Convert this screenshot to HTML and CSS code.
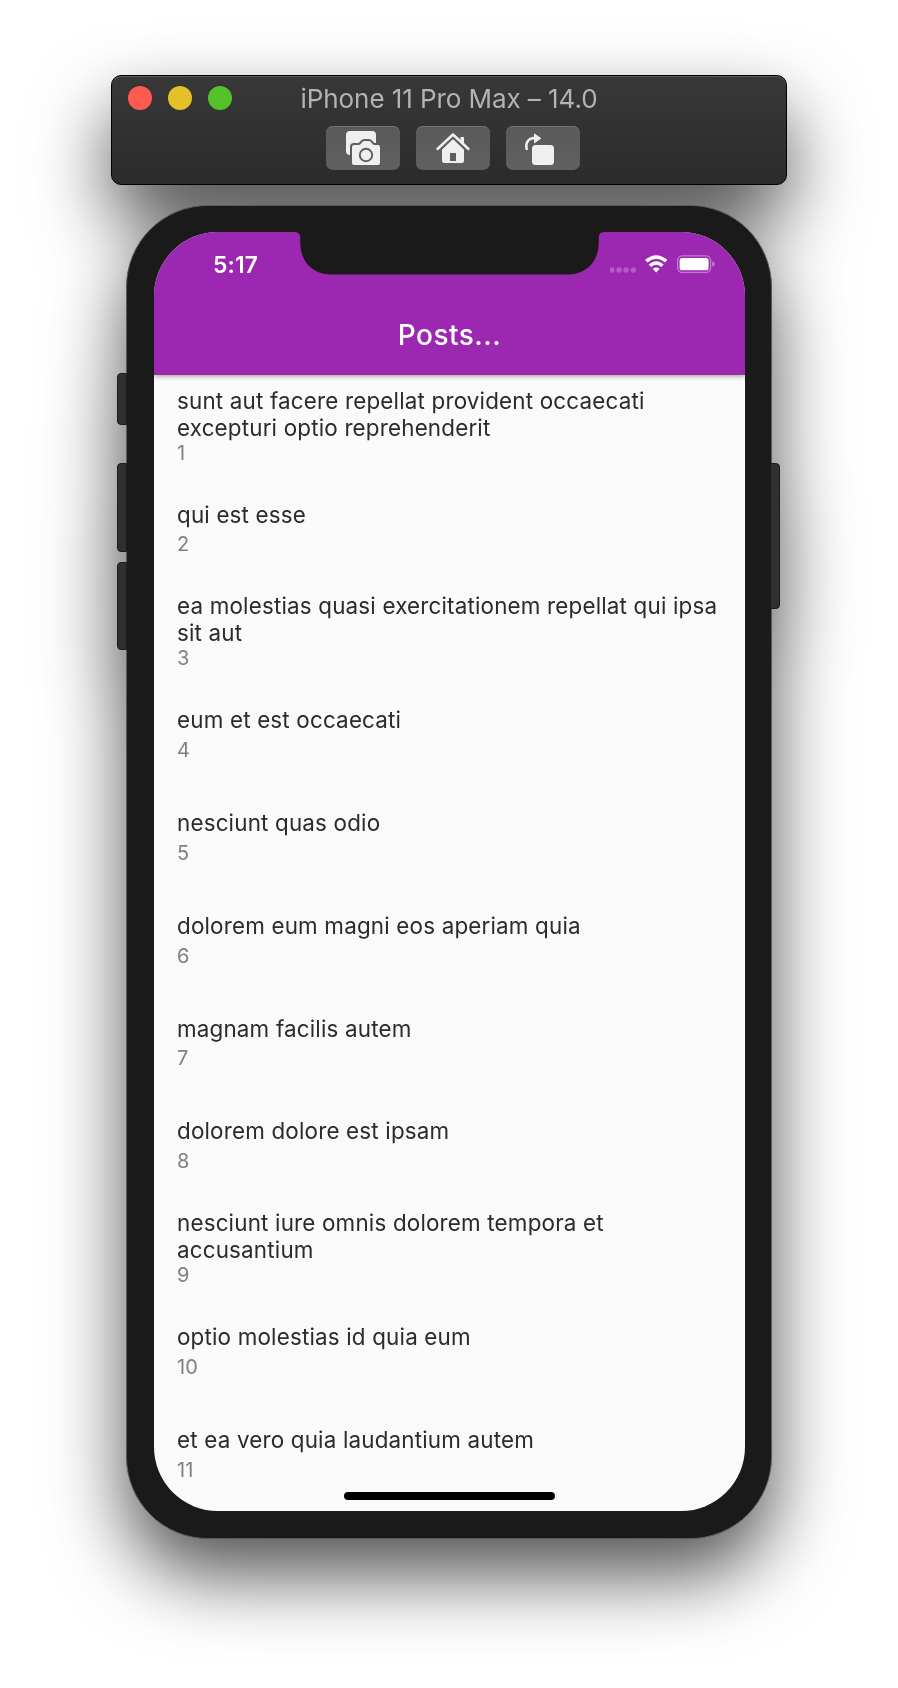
FILE: index.html
```html
<!DOCTYPE html>
<html lang="en">
<head>
<meta charset="utf-8">
<title>iPhone 11 Pro Max – 14.0</title>
<link rel="stylesheet" href="styles.css">
</head>
<body>
<main class="simulator">
  <header class="window-bar">
    <div class="title-row">
      <div class="lights"><i class="light close"></i><i class="light minimize"></i><i class="light expand"></i></div>
      <h1 class="window-title">iPhone 11 Pro Max – 14.0</h1>
    </div>
    <div class="tools">
      <button class="tool" aria-label="Screenshot">
        <svg width="74" height="44" viewBox="0 0 74 44">
          <rect x="20" y="5" width="30" height="24" rx="4" fill="#efefef"/>
          <path d="M28 19h4.500q1.500 0 2.400-1.300l1.200-1.500q1-1.200 2.500-1.200h4q1.500 0 2.500 1.200l1.200 1.500q.9 1.300 2.400 1.300H52q2 0 2 2v16q0 2-2 2H28q-2 0-2-2V21q0-2 2-2z" fill="#efefef" stroke="#5d5d5d" stroke-width="4" paint-order="stroke"/>
          <circle cx="40" cy="29" r="6.200" fill="none" stroke="#5d5d5d" stroke-width="1.900"/>
        </svg>
      </button>
      <button class="tool" aria-label="Home">
        <svg width="74" height="44" viewBox="0 0 74 44">
          <path d="M37 12L26 23v11.500q0 2.500 2.500 2.500h17q2.500 0 2.500-2.500V23z" fill="#efefef"/>
          <path d="M22 23.500L37 9.200l15 14.300" fill="none" stroke="#5d5d5d" stroke-width="5.600"/>
          <path d="M21.500 23L37 8.500 52.500 23" fill="none" stroke="#efefef" stroke-width="2.500" stroke-linecap="round" stroke-linejoin="round"/>
          <path d="M44.500 11H48v8l-3.500-3.200z" fill="#efefef"/>
          <rect x="34" y="27" width="6" height="8" fill="#5d5d5d"/>
        </svg>
      </button>
      <button class="tool" aria-label="Rotate">
        <svg width="74" height="44" viewBox="0 0 74 44">
          <rect x="26" y="19" width="22" height="20" rx="3.500" fill="#efefef"/>
          <path d="M20.700 23c-1.500-6 1.300-10.800 7.800-11" fill="none" stroke="#efefef" stroke-width="2.500" stroke-linecap="round"/>
          <path d="M28.500 8l6.200 4.300-6.200 4.500z" fill="#efefef" stroke="#efefef" stroke-width="1" stroke-linejoin="round"/>
        </svg>
      </button>
    </div>
  </header>

  <section class="phone">
    <i class="key mute"></i><i class="key volume-up"></i><i class="key volume-down"></i><i class="key power"></i>
    <div class="screen">
      <svg class="notch" width="311" height="43" viewBox="0 0 311 43"><path d="M0 0H1Q6.300 0 6.300 6V11C6.500 30 19 42.500 37.500 42.500H273.500C292 42.500 304.500 30 304.700 11V6Q304.700 0 310 0H311z" fill="#1a1a1a"/></svg>
      <div class="app-bar">
        <div class="status">
          <span class="clock">5:17</span>
          <svg class="indicators" width="108" height="20" viewBox="0 0 108 20">
            <g fill="#fff" fill-opacity=".25"><circle cx="1.800" cy="15" r="2.700"/><circle cx="9" cy="15" r="2.700"/><circle cx="16.100" cy="15" r="2.700"/><circle cx="23.300" cy="15" r="2.700"/></g>
            <g fill="none" stroke="#fff" stroke-width="3.500"><path d="M36.200 6.200Q46.200-2.200 56.200 6.200"/><path d="M39.900 10.700Q46.200 5.200 52.500 10.700"/></g>
            <path d="M42.700 13.800Q46.200 11 49.700 13.800L46.200 17.400z" fill="#fff"/>
            <rect x="67.600" y=".9" width="33" height="16.400" rx="4.600" fill="none" stroke="#fff" stroke-opacity=".4" stroke-width="1.300"/>
            <rect x="69.600" y="2.900" width="29" height="12.400" rx="2.600" fill="#fff"/>
            <path d="M102.400 6.100q2.200.8 2.200 3t-2.200 3z" fill="#fff" fill-opacity=".45"/>
          </svg>
        </div>
        <h2 class="app-title">Posts...</h2>
      </div>
      <ul class="posts">
        <li class="post two-line"><p class="name">sunt aut facere repellat provident occaecati<br>excepturi optio reprehenderit</p><p class="number">1</p></li>
        <li class="post"><p class="name">qui est esse</p><p class="number">2</p></li>
        <li class="post two-line"><p class="name">ea molestias quasi exercitationem repellat qui ipsa<br>sit aut</p><p class="number">3</p></li>
        <li class="post"><p class="name">eum et est occaecati</p><p class="number">4</p></li>
        <li class="post"><p class="name">nesciunt quas odio</p><p class="number">5</p></li>
        <li class="post"><p class="name">dolorem eum magni eos aperiam quia</p><p class="number">6</p></li>
        <li class="post"><p class="name">magnam facilis autem</p><p class="number">7</p></li>
        <li class="post"><p class="name">dolorem dolore est ipsam</p><p class="number">8</p></li>
        <li class="post two-line"><p class="name">nesciunt iure omnis dolorem tempora et<br>accusantium</p><p class="number">9</p></li>
        <li class="post"><p class="name">optio molestias id quia eum</p><p class="number">10</p></li>
        <li class="post"><p class="name">et ea vero quia laudantium autem</p><p class="number">11</p></li>
      </ul>
      <i class="home-indicator"></i>
    </div>
  </section>
</main>
</body>
</html>
```
FILE: styles.css
```css
* { box-sizing: border-box; }
body {
  margin: 0;
  height: 1688px;
  overflow: hidden;
  background: #fff;
  font-family: Inter, "Liberation Sans", sans-serif;
}
h1, h2, p, ul { margin: 0; padding: 0; }

.simulator {
  display: flex;
  flex-direction: column;
  align-items: center;
  gap: 20px;
  padding-top: 75px;
  filter: drop-shadow(0 36px 38px rgba(0, 0, 0, .68));
}

/* Window bar */
.window-bar {
  width: 676px;
  height: 110px;
  border: 1px solid #000;
  border-radius: 10px;
  background: linear-gradient(#383838, #2b2b2b);
  box-shadow: inset 0 1px 0 #5c5c5c;
}
.title-row {
  display: grid;
  grid-template-columns: 1fr auto 1fr;
  align-items: center;
  height: 44px;
  padding: 0 16px;
}
.lights { display: flex; gap: 16px; }
.light { width: 24px; height: 24px; border-radius: 50%; }
.close { background: #ff5a52; }
.minimize { background: #e6c029; }
.expand { background: #53c22b; }
.window-title {
  padding-top: 2px;
  color: #b3b3b3;
  font-size: 26px;
  font-weight: 400;
  line-height: 32px;
  letter-spacing: -.07px;
  white-space: nowrap;
}
.tools { display: flex; justify-content: center; gap: 16px; padding: 6px 0 0 7px; }
.tool {
  width: 74px;
  height: 44px;
  padding: 0;
  border: 0;
  border-radius: 7px;
  background: linear-gradient(#5a5a5a, #606060);
  box-shadow: inset 0 1px 0 #737373;
}
.tool svg { display: block; }

/* Phone */
.phone {
  position: relative;
  width: 646px;
  height: 1334px;
  padding: 26px 27px 0;
  border: 1px solid #5a5a5a;
  border-radius: 82px;
  background: #1a1a1a;
}
.key {
  position: absolute;
  left: -10px;
  width: 10px;
  border: 1px solid #1c1c1c;
  border-radius: 4px 1px 1px 4px;
  background: #303030;
}
.mute { top: 167px; height: 52px; }
.volume-up { top: 257px; height: 89px; }
.volume-down { top: 356px; height: 88px; }
.power { top: 257px; left: 643px; height: 146px; border-radius: 1px 4px 4px 1px; }

.screen {
  position: relative;
  width: 591px;
  height: 1279px;
  overflow: hidden;
  border-radius: 64px;
  background: #fafafa;
}
.notch { position: absolute; top: 0; left: 140px; }
.app-bar {
  height: 143px;
  background: #9c27b0;
  box-shadow: 0 1px 5px rgba(0, 0, 0, .4);
}
.status {
  display: flex;
  justify-content: space-between;
  height: 78px;
  padding: 19px 27px 0 59px;
}
.clock {
  color: #fff;
  font-size: 22.800px;
  font-weight: 600;
  line-height: 27px;
  letter-spacing: .2px;
}
.indicators { margin-top: 4px; }
.app-title {
  color: #fff;
  font-size: 28px;
  font-weight: 500;
  line-height: 34px;
  letter-spacing: .5px;
  padding-top: 8px;
  text-align: center;
}

.posts { list-style: none; }
.post { height: 102.800px; padding: 22.900px 0 0 23px; }
.two-line { padding-top: 11.900px; }
.name {
  color: #2b2b2b;
  font-size: 22.400px;
  line-height: 27px;
  letter-spacing: .18px;
  white-space: nowrap;
}
.number {
  margin-top: 4.700px;
  color: #808080;
  font-size: 20px;
  line-height: 24px;
}
.two-line .number { margin-top: 0; }

.home-indicator {
  position: absolute;
  left: 190px;
  bottom: 11.500px;
  width: 211px;
  height: 7.500px;
  border-radius: 4px;
  background: #000;
}
```
